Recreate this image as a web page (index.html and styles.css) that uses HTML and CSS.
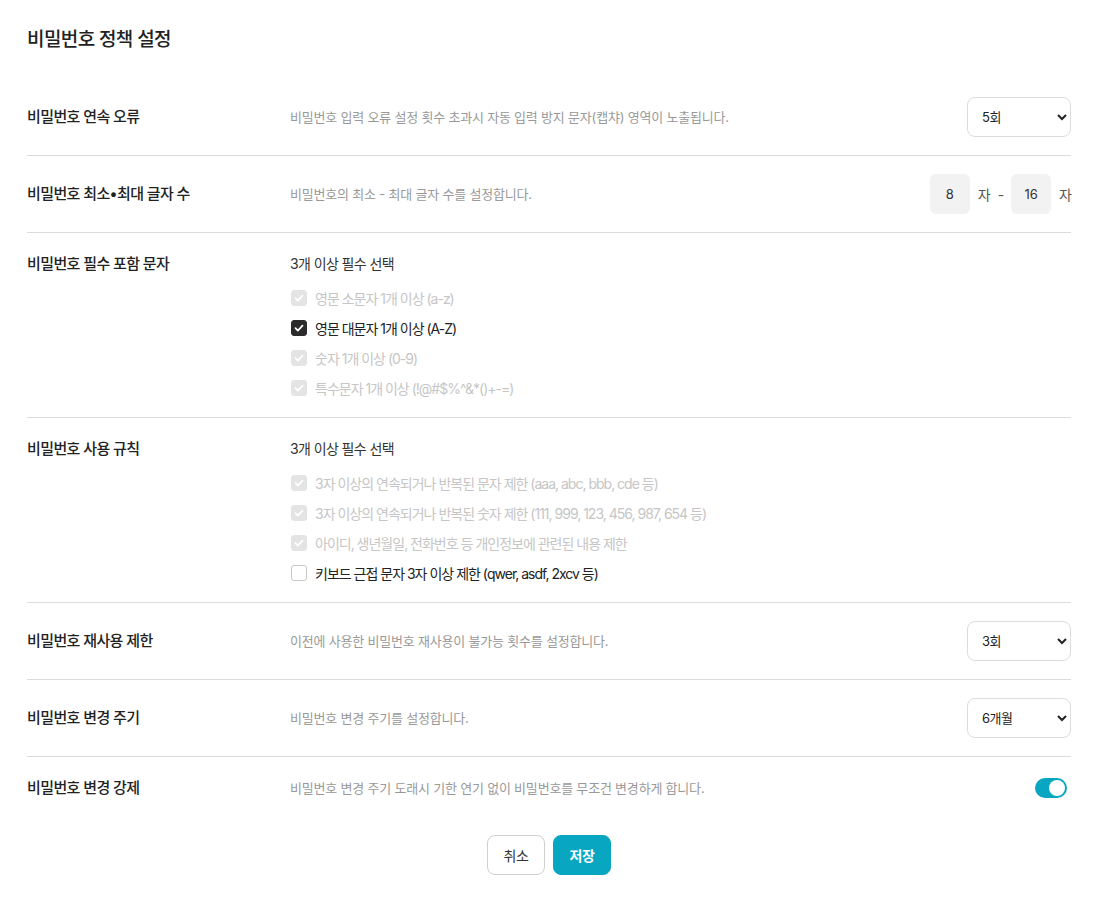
FILE: index.html
```html
<!DOCTYPE html>
<html lang="ko">
<head>
<meta charset="utf-8">
<title>비밀번호 정책 설정</title>
<link rel="stylesheet" href="styles.css">
</head>
<body>
<div class="page">
  <h1 class="title">비밀번호 정책 설정</h1>

  <div class="row">
    <div class="label">비밀번호 연속 오류</div>
    <div class="desc">비밀번호 입력 오류 설정 횟수 초과시 자동 입력 방지 문자(캡챠) 영역이 노출됩니다.</div>
    <div class="ctrl">
      <select class="select"><option>5회</option></select>
    </div>
  </div>

  <div class="row">
    <div class="label">비밀번호 최소•최대 글자 수</div>
    <div class="desc">비밀번호의 최소 - 최대 글자 수를 설정합니다.</div>
    <div class="ctrl range">
      <span class="numbox">8</span>
      <span class="unit">자</span>
      <span class="dash">-</span>
      <span class="numbox">16</span>
      <span class="unit">자</span>
    </div>
  </div>

  <div class="row top">
    <div class="label">비밀번호 필수 포함 문자</div>
    <div class="group">
      <div class="group-head">3개 이상 필수 선택</div>
      <div class="check disabled"><span class="box on"><svg viewBox="0 0 16 16"><path d="M4 8.2l2.7 2.7L12 5.4"/></svg></span>영문 소문자 1개 이상 (a-z)</div>
      <div class="check"><span class="box on dark"><svg viewBox="0 0 16 16"><path d="M4 8.2l2.7 2.7L12 5.4"/></svg></span>영문 대문자 1개 이상 (A-Z)</div>
      <div class="check disabled"><span class="box on"><svg viewBox="0 0 16 16"><path d="M4 8.2l2.7 2.7L12 5.4"/></svg></span>숫자 1개 이상 (0-9)</div>
      <div class="check disabled"><span class="box on"><svg viewBox="0 0 16 16"><path d="M4 8.2l2.7 2.7L12 5.4"/></svg></span>특수문자 1개 이상 (!@#$%^&amp;*()+-=)</div>
    </div>
  </div>

  <div class="row top">
    <div class="label">비밀번호 사용 규칙</div>
    <div class="group">
      <div class="group-head">3개 이상 필수 선택</div>
      <div class="check disabled"><span class="box on"><svg viewBox="0 0 16 16"><path d="M4 8.2l2.7 2.7L12 5.4"/></svg></span>3자 이상의 연속되거나 반복된 문자 제한 (aaa, abc, bbb, cde 등)</div>
      <div class="check disabled"><span class="box on"><svg viewBox="0 0 16 16"><path d="M4 8.2l2.7 2.7L12 5.4"/></svg></span>3자 이상의 연속되거나 반복된 숫자 제한 (111, 999, 123, 456, 987, 654 등)</div>
      <div class="check disabled"><span class="box on"><svg viewBox="0 0 16 16"><path d="M4 8.2l2.7 2.7L12 5.4"/></svg></span>아이디, 생년월일, 전화번호 등 개인정보에 관련된 내용 제한</div>
      <div class="check"><span class="box"></span>키보드 근접 문자 3자 이상 제한 (qwer, asdf, 2xcv 등)</div>
    </div>
  </div>

  <div class="row">
    <div class="label">비밀번호 재사용 제한</div>
    <div class="desc">이전에 사용한 비밀번호 재사용이 불가능 횟수를 설정합니다.</div>
    <div class="ctrl">
      <select class="select"><option>3회</option></select>
    </div>
  </div>

  <div class="row">
    <div class="label">비밀번호 변경 주기</div>
    <div class="desc">비밀번호 변경 주기를 설정합니다.</div>
    <div class="ctrl">
      <select class="select"><option>6개월</option></select>
    </div>
  </div>

  <div class="row last">
    <div class="label">비밀번호 변경 강제</div>
    <div class="desc">비밀번호 변경 주기 도래시 기한 연기 없이 비밀번호를 무조건 변경하게 합니다.</div>
    <div class="ctrl">
      <span class="toggle"><span class="knob"></span></span>
    </div>
  </div>

  <div class="actions">
    <button class="btn cancel">취소</button>
    <button class="btn save">저장</button>
  </div>
</div>
</body>
</html>
```

FILE: styles.css
```css
* { box-sizing: border-box; }
html, body { margin: 0; padding: 0; background: #fff; }
body {
  font-family: "Inter", "Noto Sans CJK KR", sans-serif;
  color: #222;
}
.page {
  width: 1044px;
  margin-left: 27px;
}
.title {
  margin: 0;
  padding-top: 26px;
  height: 79px;
  font-size: 19px;
  line-height: 28px;
  font-weight: 500;
  letter-spacing: -0.6px;
  color: #222;
}
.row {
  display: grid;
  grid-template-columns: 263px 1fr auto;
  align-items: center;
  padding: 18px 0 18px;
  border-bottom: 1px solid #dcdcdc;
}
.row.top {
  align-items: start;
  padding: 20px 0 14px;
}
.row.last { border-bottom: none; padding: 20px 0 20px; }
.label {
  font-size: 15px;
  line-height: 22px;
  font-weight: 500;
  letter-spacing: -0.6px;
  color: #222;
}
.desc {
  font-size: 13px;
  line-height: 20px;
  letter-spacing: -0.2px;
  color: #999;
}
.ctrl { display: flex; align-items: center; }
.select {
  width: 104px;
  height: 40px;
  padding: 0 8px 0 10px;
  border: 1px solid #dcdcdc;
  border-radius: 8px;
  background: #fff;
  font-family: "Inter", "Noto Sans CJK KR", sans-serif;
  font-size: 13px;
  letter-spacing: -0.5px;
  color: #222;
}
.range { margin-right: -1px; }
.numbox {
  width: 40px;
  height: 40px;
  border-radius: 6px;
  background: #f2f2f2;
  display: flex;
  align-items: center;
  justify-content: center;
  font-size: 13px;
  color: #333;
}
.unit {
  font-size: 14px;
  color: #555;
  margin-left: 8px;
}
.dash {
  font-size: 14px;
  color: #555;
  margin: 0 7px 0 7px;
}
.group {
  grid-column: 2 / 4;
}
.group-head {
  font-size: 14px;
  line-height: 22px;
  letter-spacing: -0.6px;
  color: #333;
  margin-bottom: 8px;
}
.check {
  display: flex;
  align-items: center;
  height: 30px;
  font-size: 14px;
  letter-spacing: -1px;
  color: #222;
}
.check.disabled { color: #c6c6c6; }
.box {
  width: 16px;
  height: 16px;
  margin-left: 1px;
  margin-right: 8px;
  border-radius: 3px;
  border: 1px solid #c8c8c8;
  background: #fff;
  display: flex;
  align-items: center;
  justify-content: center;
  flex: none;
}
.box.on { background: #e4e4e4; border-color: #e4e4e4; }
.box.on.dark { background: #2b2b2b; border-color: #2b2b2b; }
.box svg { width: 14px; height: 14px; }
.box svg path {
  fill: none;
  stroke: #fff;
  stroke-width: 2;
  stroke-linecap: round;
  stroke-linejoin: round;
}
.toggle {
  width: 32px;
  height: 20px;
  border-radius: 10px;
  background: #08a6c0;
  display: flex;
  align-items: center;
  justify-content: flex-end;
  padding-right: 2px;
  margin-right: 4px;
}
.knob {
  width: 16px;
  height: 16px;
  border-radius: 50%;
  background: #fff;
}
.actions {
  display: flex;
  justify-content: center;
  gap: 8px;
  padding-top: 16px;
}
.btn {
  width: 58px;
  height: 40px;
  border-radius: 8px;
  font-family: "Inter", "Noto Sans CJK KR", sans-serif;
  font-size: 14px;
  letter-spacing: -0.5px;
  cursor: pointer;
}
.btn.cancel {
  background: #fff;
  border: 1px solid #d0d0d0;
  color: #333;
}
.btn.save {
  background: #08a6c0;
  border: 1px solid #08a6c0;
  color: #fff;
  font-weight: 600;
}
```
